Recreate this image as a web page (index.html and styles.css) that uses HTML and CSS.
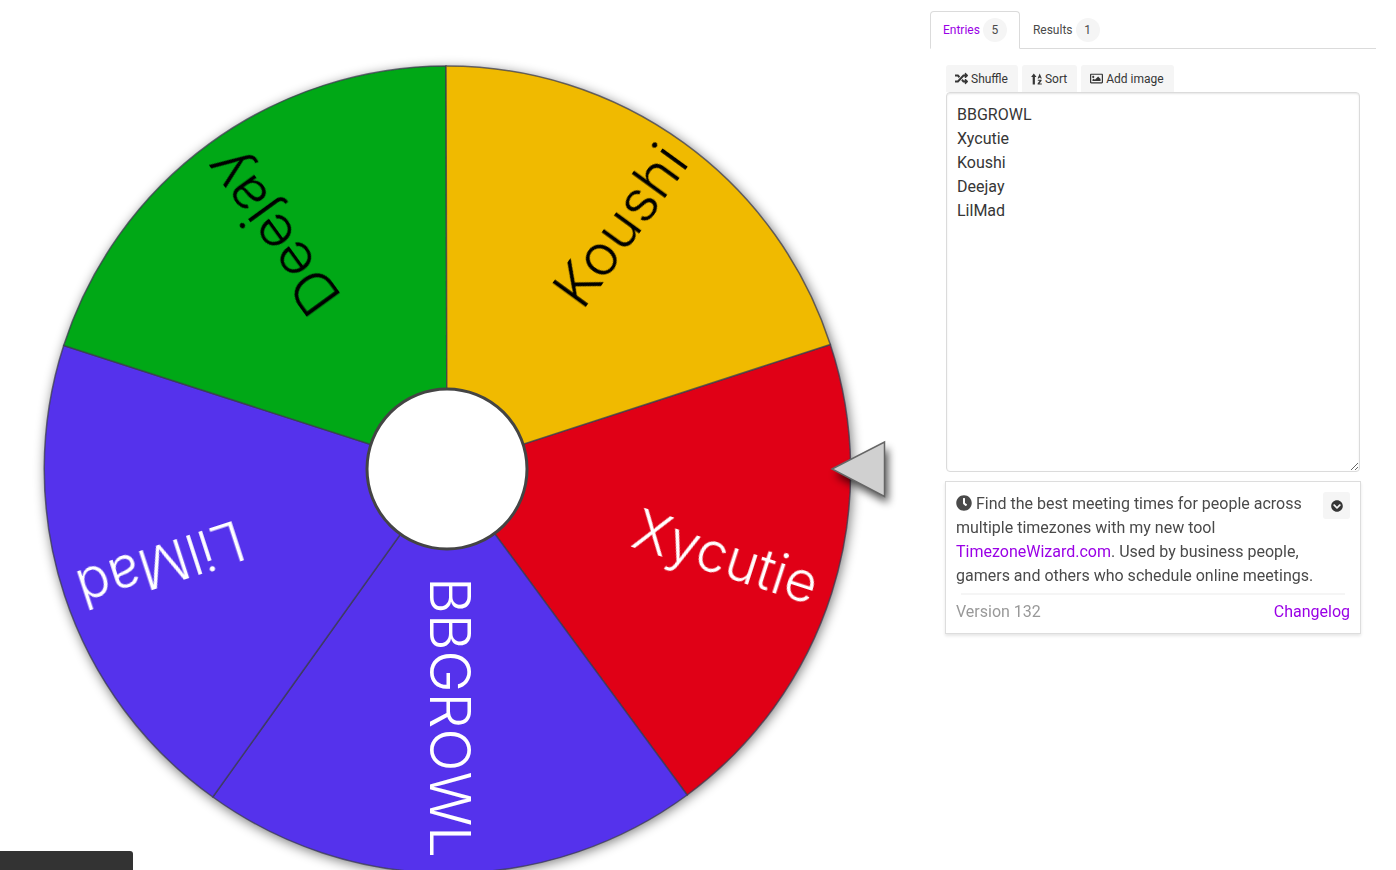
FILE: index.html
```html
<!DOCTYPE html>
<html lang="en">
<head>
    <meta charset="UTF-8">
    <meta name="viewport" content="width=device-width, initial-scale=1.0">
    <title>Wheel of Names</title>
    <link rel="stylesheet" href="styles.css">
</head>
<body>
    <div class="page">
        <div class="wheel-col">
            <svg class="wheel" width="930" height="870" viewBox="0 0 930 870">
                <defs>
                    <filter id="wheelShadow" x="-10%" y="-10%" width="120%" height="120%">
                        <feGaussianBlur stdDeviation="6"/>
                    </filter>
                    <filter id="soft" x="-10%" y="-10%" width="120%" height="120%">
                        <feGaussianBlur stdDeviation="0.6"/>
                    </filter>
                    <filter id="pointerShadow" x="-50%" y="-50%" width="200%" height="200%">
                        <feGaussianBlur stdDeviation="4"/>
                    </filter>
                </defs>

                <circle cx="449" cy="472" r="404" fill="#000" opacity="0.5" filter="url(#wheelShadow)"/>

                <g stroke="#3c3c50" stroke-width="1.5" stroke-opacity="0.75" filter="url(#soft)">
                    <path d="M447 469 L830.3 344.5 A403 403 0 0 1 687.2 795 Z" fill="#e00016"/>
                    <path d="M447 469 L687.2 795 A403 403 0 0 1 212.8 797 Z" fill="#5433ec"/>
                    <path d="M447 469 L212.8 797 A403 403 0 0 1 63.7 345.5 Z" fill="#5433ec"/>
                    <path d="M447 469 L63.7 345.5 A403 403 0 0 1 446 66 Z" fill="#00a818"/>
                    <path d="M447 469 L446 66 A403 403 0 0 1 830.3 344.5 Z" fill="#f0ba00"/>
                </g>

                <g class="slice-text" filter="url(#soft)">
                    <text transform="translate(447 469) rotate(90)" x="389" y="17" textLength="281" lengthAdjust="spacingAndGlyphs" fill="#fff">BBGROWL</text>
                    <text transform="translate(447 469) rotate(18)" x="388" y="17" textLength="191" lengthAdjust="spacingAndGlyphs" fill="#fff">Xycutie</text>
                    <text transform="translate(447 469) rotate(-54)" x="391" y="17" textLength="184" lengthAdjust="spacingAndGlyphs" fill="#000">Koushi</text>
                    <text transform="translate(447 469) rotate(-126)" x="388" y="17" textLength="188" lengthAdjust="spacingAndGlyphs" fill="#000">Deejay</text>
                    <text transform="translate(447 469) rotate(162)" x="388" y="17" textLength="172" lengthAdjust="spacingAndGlyphs" fill="#fff">LilMad</text>
                </g>

                <circle cx="447" cy="469" r="80" fill="#fff" stroke="#444" stroke-width="3"/>

                <path d="M832 469 L885 442 L885 497 Z" fill="#000" opacity="0.7" transform="translate(3 6)" filter="url(#pointerShadow)"/>
                <path d="M832 469 L884.5 442 L884.5 496.5 Z" fill="#d0d0d0" stroke="#666" stroke-width="1.5"/>
            </svg>
        </div>

        <div class="side-col">
            <div class="tabs">
                <a class="tab active">Entries <span class="count">5</span></a>
                <a class="tab">Results <span class="count">1</span></a>
            </div>

            <div class="entries">
                <div class="toolbar">
                    <button class="tool-btn">
                        <svg class="icon" viewBox="0 0 512 512"><path d="M504.971 359.029c9.373 9.373 9.373 24.569 0 33.941l-80 79.984c-15.01 15.01-40.971 4.49-40.971-16.971V416h-58.785a12.004 12.004 0 0 1-8.773-3.812l-70.556-75.596 53.333-57.143L352 336h32v-39.981c0-21.438 25.943-31.998 40.971-16.971l80 79.981zM12 176h84l52.781 56.551 53.333-57.143-70.556-75.596A11.999 11.999 0 0 0 122.785 96H12c-6.627 0-12 5.373-12 12v56c0 6.627 5.373 12 12 12zm372 0v39.984c0 21.46 25.961 31.98 40.971 16.971l80-79.984c9.373-9.373 9.373-24.569 0-33.941l-80-79.981C409.943 24.021 384 34.582 384 56.019V96h-58.785a12.004 12.004 0 0 0-8.773 3.812L96 336H12c-6.627 0-12 5.373-12 12v56c0 6.627 5.373 12 12 12h110.785c3.326 0 6.503-1.381 8.773-3.812L352 176h32z"/></svg>
                        Shuffle
                    </button>
                    <button class="tool-btn">
                        <svg class="icon icon-sort" viewBox="0 0 11 12"><path d="M2.8 0.5 L5.5 4 H3.9 V11.5 H1.7 V4 H0.1 Z"/><path d="M8.7 0.5 L10.8 5.5 H9.6 L9.3 4.7 H8.1 L7.8 5.5 H6.6 Z M6.8 6.7 H10.6 V7.8 L8.5 10.4 H10.8 V11.5 H6.6 V10.4 L8.7 7.8 H6.8 Z"/></svg>
                        Sort
                    </button>
                    <button class="tool-btn">
                        <svg class="icon" viewBox="0 0 512 512"><path d="M464 64H48C21.49 64 0 85.49 0 112v288c0 26.51 21.49 48 48 48h416c26.51 0 48-21.49 48-48V112c0-26.51-21.49-48-48-48zm-6 336H54a6 6 0 0 1-6-6V118a6 6 0 0 1 6-6h404a6 6 0 0 1 6 6v276a6 6 0 0 1-6 6zM128 152c-22.091 0-40 17.909-40 40s17.909 40 40 40 40-17.909 40-40-17.909-40-40-40zM96 352h320v-80l-87.515-87.515c-4.686-4.686-12.284-4.686-16.971 0L192 304l-39.515-39.515c-4.686-4.686-12.284-4.686-16.971 0L96 304v48z"/></svg>
                        Add image
                    </button>
                </div>

                <textarea class="names" spellcheck="false">BBGROWL
Xycutie
Koushi
Deejay
LilMad</textarea>

                <div class="card">
                    <div class="card-top">
                        <p class="card-text">
                            <svg class="clock" viewBox="0 0 512 512"><path d="M256,8C119,8,8,119,8,256S119,504,256,504,504,393,504,256,393,8,256,8Zm92.49,313h0l-20,25a16,16,0,0,1-22.49,2.5h0l-67-49.72a40,40,0,0,1-15-31.23V112a16,16,0,0,1,16-16h32a16,16,0,0,1,16,16V256l58,42.5A16,16,0,0,1,348.49,321Z"/></svg>
                            Find the best meeting times for people across multiple timezones with my new tool <a class="link">TimezoneWizard.com</a>. Used by business people, gamers and others who schedule online meetings.
                        </p>
                        <button class="collapse-btn">
                            <svg class="chevron" viewBox="0 0 512 512"><path d="M504 256c0 137-111 248-248 248S8 393 8 256 119 8 256 8s248 111 248 248zM273 369.9l135.5-135.5c9.4-9.4 9.4-24.6 0-33.9l-17-17c-9.4-9.4-24.6-9.4-33.9 0L256 285.1 154.4 183.5c-9.4-9.4-24.6-9.4-33.9 0l-17 17c-9.4 9.4-9.4 24.6 0 33.9L239 369.9c9.4 9.4 24.6 9.4 34 0z"/></svg>
                        </button>
                    </div>
                    <hr class="divider">
                    <div class="card-foot">
                        <span class="version">Version 132</span>
                        <a class="link">Changelog</a>
                    </div>
                </div>
            </div>
        </div>
    </div>

    <div class="bottom-bar"></div>
</body>
</html>
```

FILE: styles.css
```css
html, body {
    margin: 0;
    height: 100%;
    overflow: hidden;
    background: #fff;
}
body {
    font-family: Roboto, "Liberation Sans", sans-serif;
    font-size: 16px;
    line-height: 24px;
    color: #4a4a4a;
}
.page {
    display: flex;
    height: 870px;
}
.wheel-col {
    width: 930px;
    flex: none;
}
.wheel {
    display: block;
}
.slice-text text {
    font-family: Inter, Lato, sans-serif;
    font-size: 56px;
    font-weight: 300;
    font-variant-ligatures: none;
    text-anchor: end;
}
.side-col {
    width: 446px;
    flex: none;
    padding-top: 11px;
}
.tabs {
    display: flex;
    height: 37px;
    border-bottom: 1px solid #dbdbdb;
}
.tab {
    display: flex;
    align-items: center;
    gap: 3px;
    padding: 0 12px;
    font-size: 12px;
    height: 38px;
    box-sizing: border-box;
    border: 1px solid transparent;
    border-radius: 4px 4px 0 0;
}
.tab.active {
    color: #9a00e6;
    background: #fff;
    border-color: #dbdbdb;
    border-bottom-color: #fff;
}
.count {
    width: 24px;
    height: 24px;
    border-radius: 50%;
    background: #f5f5f5;
    color: #4a4a4a;
    text-align: center;
    line-height: 24px;
}
.entries {
    padding: 16px 16px 0;
}
.toolbar {
    display: flex;
    gap: 4px;
    height: 27px;
}
.tool-btn {
    display: flex;
    align-items: center;
    gap: 3px;
    padding: 0 10px 0 9px;
    border: none;
    border-radius: 3px 3px 0 0;
    background: #f5f5f5;
    color: #363636;
    font-family: inherit;
    font-size: 12px;
}
.icon {
    width: 13px;
    height: 13px;
    fill: #363636;
}
.icon-sort {
    width: 11px;
    height: 12px;
}
.names {
    display: block;
    width: 414px;
    height: 380px;
    box-sizing: border-box;
    margin: 0;
    padding: 10px 10px 8px;
    border: 1px solid #dbdbdb;
    border-radius: 4px;
    box-shadow: inset 0 1px 2px rgba(10, 10, 10, 0.1);
    font-family: inherit;
    font-size: 16px;
    line-height: 24px;
    color: #363636;
    outline: none;
}
.card {
    width: 416px;
    margin: 9px 0 0 -1px;
    box-sizing: border-box;
    padding: 10px 10px 9px;
    border: 1px solid #ddd;
    box-shadow: 0 2px 3px rgba(10, 10, 10, 0.1);
}
.card-top {
    display: flex;
    justify-content: space-between;
    align-items: flex-start;
}
.card-text {
    margin: 0;
    width: 360px;
}
.clock {
    width: 16px;
    height: 16px;
    fill: #4a4a4a;
    vertical-align: -2px;
}
.collapse-btn {
    display: flex;
    align-items: center;
    justify-content: center;
    width: 27px;
    height: 27px;
    padding: 0;
    border: none;
    border-radius: 3px;
    background: #f5f5f5;
}
.chevron {
    width: 12px;
    height: 12px;
    fill: #363636;
}
.divider {
    height: 2px;
    margin: 5px 5px 5px;
    border: none;
    background: #f5f5f5;
}
.card-foot {
    display: flex;
    justify-content: space-between;
}
.version {
    color: #999;
}
.link {
    color: #9a00e6;
}
.bottom-bar {
    position: fixed;
    left: 0;
    bottom: 0;
    width: 133px;
    height: 19px;
    background: #333;
    border-radius: 0 3px 0 0;
}
```
